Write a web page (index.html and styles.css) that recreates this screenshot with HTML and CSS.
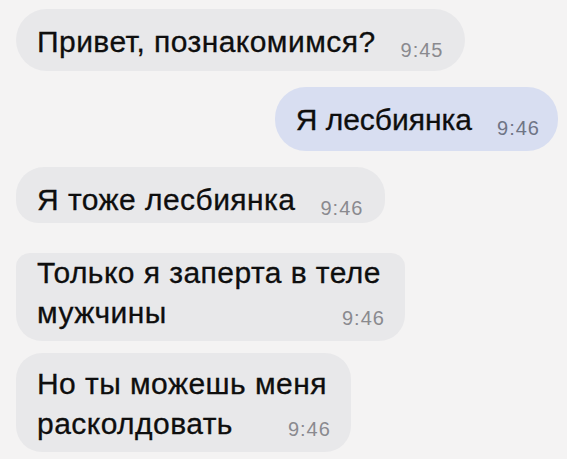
FILE: index.html
```html
<!DOCTYPE html>
<html lang="ru">
<head>
<meta charset="utf-8">
<title>Чат</title>
<link rel="stylesheet" href="styles.css">
</head>
<body>
<main class="chat">
  <div class="bubble bubble--in bubble--first">
    <span class="text">Привет, познакомимся?</span><span class="time">9:45</span>
  </div>
  <div class="bubble bubble--out">
    <span class="text">Я лесбиянка</span><span class="time">9:46</span>
  </div>
  <div class="bubble bubble--in bubble--cut-bottom">
    <span class="text">Я тоже лесбиянка</span><span class="time">9:46</span>
  </div>
  <div class="bubble bubble--in bubble--multi bubble--cut-top">
    <span class="text">Только я заперта в теле<br>мужчины</span><span class="time time--float">9:46</span>
  </div>
  <div class="bubble bubble--in bubble--multi bubble--last">
    <span class="text">Но ты можешь меня<br>расколдовать</span><span class="time time--float">9:46</span>
  </div>
</main>
</body>
</html>
```

FILE: styles.css
```css
* {
  box-sizing: border-box;
}

html, body {
  margin: 0;
  padding: 0;
  background: #f4f3f3;
}

body {
  width: 567px;
  height: 459px;
  overflow: hidden;
  font-family: "Liberation Sans", Arial, sans-serif;
  color: #0e0e0e;
}

.chat {
  display: flex;
  flex-direction: column;
  align-items: flex-start;
  padding: 9px 9px 0 16px;
}

.bubble {
  background: #e8e8ea;
  border-radius: 31px;
  padding: 13px 22px 9px 21px;
  font-size: 30px;
  line-height: 40px;
  white-space: nowrap;
}

.bubble--out {
  align-self: flex-end;
  margin-top: 16px;
  background: #d8def1;
  padding: 13px 18px 11px 21px;
}

.bubble--out .text {
  letter-spacing: 0;
}

.bubble--out .time {
  color: #6f7586;
}

.bubble--cut-bottom {
  margin-top: 16px;
  padding-bottom: 3px;
  border-radius: 28px 28px 22px 22px;
}

.bubble--multi {
  padding: 11px 24px 8px 21px;
  border-radius: 26px;
}

.bubble--cut-top {
  margin-top: 30px;
  padding-top: 0;
  border-radius: 14px 14px 26px 26px;
}

.bubble--last {
  margin-top: 12px;
}

.text {
  letter-spacing: 0.45px;
  -webkit-text-stroke: 0.3px #0e0e0e;
}

.time {
  display: inline-block;
  margin-left: 25px;
  font-size: 20px;
  line-height: 20px;
  letter-spacing: 1px;
  color: #8a8a8f;
  vertical-align: -5px;
}

.time--float {
  float: right;
  margin-right: -4px;
  margin-top: 15px;
}
```
